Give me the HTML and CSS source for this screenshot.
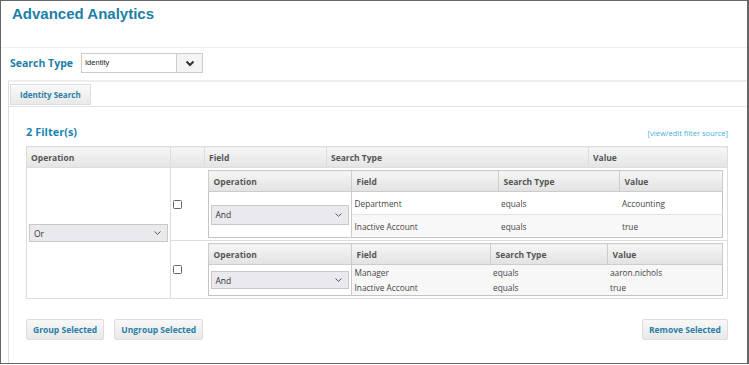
FILE: index.html
```html
<!DOCTYPE html>
<html lang="en">
	<head>
		<meta charset="UTF-8" />
		<title>Advanced Analytics</title>
		<link rel="stylesheet" href="styles.css">
	</head>
	<body>
		<div class="frame">
			<div class="page-header">
				<h1 class="title">Advanced Analytics</h1>
			</div>

			<div class="search-row">
				<span class="search-label">Search Type</span>
				<div class="select-box">
					<span class="select-value">Identity</span>
					<span class="select-btn">
						<svg width="10" height="7" viewBox="0 0 10 7"><path d="M1.5 1.5 L5 5 L8.5 1.5" fill="none" stroke="#333" stroke-width="2"/></svg>
					</span>
				</div>
			</div>

			<div class="panel">
				<div class="tab-bar">
					<span class="tab">Identity Search</span>
				</div>

				<div class="panel-body">
					<div class="filters-head">
						<span class="filters-title">2 Filter(s)</span>
						<a class="source-link" href="#">[view/edit filter source]</a>
					</div>

					<table class="filters">
						<colgroup>
							<col style="width: 144px" />
							<col style="width: 34px" />
							<col style="width: 122px" />
							<col style="width: 262px" />
							<col />
						</colgroup>
						<thead>
							<tr>
								<th>Operation</th>
								<th></th>
								<th>Field</th>
								<th>Search Type</th>
								<th>Value</th>
							</tr>
						</thead>
						<tbody>
							<tr class="first-row">
								<td rowspan="2" class="op-cell">
									<div class="op-select">
										<span>Or</span>
										<svg width="7" height="4" viewBox="0 0 7 4"><path d="M0.5 0.5 L3.5 3.3 L6.5 0.5" fill="none" stroke="#555" stroke-width="1"/></svg>
									</div>
								</td>
								<td class="check-cell"><span class="checkbox"></span></td>
								<td colspan="3" class="group-cell">
									<table class="group group-a">
										<colgroup>
											<col style="width: 143px" />
											<col style="width: 147px" />
											<col style="width: 121px" />
											<col />
										</colgroup>
										<thead>
											<tr>
												<th>Operation</th>
												<th>Field</th>
												<th>Search Type</th>
												<th>Value</th>
											</tr>
										</thead>
										<tbody>
											<tr>
												<td rowspan="2" class="group-op">
													<div class="op-select">
														<span>And</span>
														<svg width="7" height="4" viewBox="0 0 7 4"><path d="M0.5 0.5 L3.5 3.3 L6.5 0.5" fill="none" stroke="#555" stroke-width="1"/></svg>
													</div>
												</td>
												<td>Department</td>
												<td>equals</td>
												<td>Accounting</td>
											</tr>
											<tr class="alt">
												<td>Inactive Account</td>
												<td>equals</td>
												<td>true</td>
											</tr>
										</tbody>
									</table>
								</td>
							</tr>
							<tr class="second-row">
								<td class="check-cell"><span class="checkbox"></span></td>
								<td colspan="3" class="group-cell">
									<table class="group group-b">
										<colgroup>
											<col style="width: 143px" />
											<col style="width: 139px" />
											<col style="width: 117px" />
											<col />
										</colgroup>
										<thead>
											<tr>
												<th>Operation</th>
												<th>Field</th>
												<th>Search Type</th>
												<th>Value</th>
											</tr>
										</thead>
										<tbody>
											<tr>
												<td rowspan="2" class="group-op">
													<div class="op-select">
														<span>And</span>
														<svg width="7" height="4" viewBox="0 0 7 4"><path d="M0.5 0.5 L3.5 3.3 L6.5 0.5" fill="none" stroke="#555" stroke-width="1"/></svg>
													</div>
												</td>
												<td>Manager</td>
												<td>equals</td>
												<td>aaron.nichols</td>
											</tr>
											<tr>
												<td>Inactive Account</td>
												<td>equals</td>
												<td>true</td>
											</tr>
										</tbody>
									</table>
								</td>
							</tr>
						</tbody>
					</table>

					<div class="actions">
						<div class="actions-left">
							<button class="btn">Group Selected</button>
							<button class="btn">Ungroup Selected</button>
						</div>
						<button class="btn">Remove Selected</button>
					</div>
				</div>
			</div>
		</div>
	</body>
</html>
```

FILE: styles.css
```css
body {
	margin: 0;
	font-family: "Open Sans", "Liberation Sans", sans-serif;
	color: #444;
	background: #fff;
}
.frame {
	box-sizing: border-box;
	width: 749px;
	height: 364px;
	border: 1px solid #666;
	border-right-width: 2px;
	display: flex;
	flex-direction: column;
}
.page-header {
	height: 46px;
	padding-left: 11px;
	border-bottom: 1px solid #eee;
}
.title {
	margin: 0;
	padding-top: 4px;
	font: bold 15px/17px "Liberation Sans", Arial, sans-serif;
	color: #1b7fa7;
}
.search-row {
	display: flex;
	align-items: center;
	height: 20px;
	padding: 5px 0 7px 9px;
}
.search-label {
	font-size: 10.5px;
	font-weight: bold;
	color: #1b7ea6;
	margin-right: 8px;
}
.select-box {
	box-sizing: border-box;
	display: flex;
	width: 122px;
	height: 20px;
	border: 1px solid #ccc;
}
.select-value {
	flex: 1;
	padding-left: 3px;
	font: 7.5px/18px "Liberation Sans", Arial, sans-serif;
	color: #222;
}
.select-btn {
	width: 25px;
	display: flex;
	align-items: center;
	justify-content: center;
	border-left: 1px solid #ccc;
	background: #f4f4f4;
}
.panel {
	flex: 1;
	margin-left: 7px;
	border-left: 1px solid #ddd;
	border-top: 2px solid #eee;
}
.tab-bar {
	display: flex;
	padding: 2px 0 1px 1px;
	border-bottom: 1px solid #e3e3e3;
}
.tab {
	box-sizing: border-box;
	display: inline-flex;
	align-items: center;
	height: 21px;
	padding: 0 9px;
	border: 1px solid #ddd;
	background: linear-gradient(#fafafa, #e9e9e9);
	font-size: 8px;
	font-weight: bold;
	color: #2a7ea6;
}
.panel-body {
	padding: 17px 19px 0 17px;
}
.filters-head {
	display: flex;
	justify-content: space-between;
	align-items: baseline;
	margin-bottom: 7px;
}
.filters-title {
	font-size: 11px;
	line-height: 15px;
	font-weight: bold;
	color: #1b86b0;
}
.source-link {
	font-size: 7.5px;
	color: #3fb0dc;
	text-decoration: none;
}
.filters {
	width: 100%;
	table-layout: fixed;
	border-collapse: collapse;
	border: 1px solid #ddd;
}
.filters > thead th {
	height: 20px;
	padding: 0 0 0 4px;
	text-align: left;
	font-size: 8.5px;
	font-weight: bold;
	color: #555;
	border: 1px solid #ddd;
	background: linear-gradient(#f6f6f6, #e4e4e4);
}
.filters > tbody > tr > td {
	padding: 0;
	vertical-align: middle;
}
.op-cell {
	padding: 0 2px !important;
	border-right: 1px solid #ddd;
}
.second-row > td {
	border-top: 1px solid #ddd;
}
.check-cell {
	padding-left: 2px !important;
}
.checkbox {
	display: block;
	box-sizing: border-box;
	width: 9px;
	height: 9px;
	border: 1px solid #666;
	border-radius: 1.5px;
	background: #fff;
}
.group-cell {
	padding: 2px 4px 2px 3px !important;
}
.op-select {
	box-sizing: border-box;
	display: flex;
	align-items: center;
	justify-content: space-between;
	height: 18px;
	padding: 0 6px 0 4px;
	border: 1px solid #c8c8c8;
	background: #eaeaee;
	font-size: 8.5px;
	color: #333;
}
.group {
	width: 100%;
	table-layout: fixed;
	border-collapse: collapse;
	border: 1px solid #c4c4c4;
	font-size: 8.3px;
}
.group th {
	height: 20px;
	padding: 0 0 0 5px;
	text-align: left;
	font-size: 8.5px;
	font-weight: bold;
	color: #555;
	border: 1px solid #ccc;
	background: linear-gradient(#f6f6f6, #e2e2e2);
}
.group td {
	padding: 0 0 0 3px;
	color: #444;
}
.group-a td {
	height: 22px;
}
.group-a .alt td {
	border-top: 1px solid #e2e2e2;
	background: #f8f8f8;
}
.group-b td {
	height: 15px;
	background: #f7f7f7;
}
.group-op {
	padding: 0 2px !important;
	border-right: 1px solid #ccc;
	background: #fff !important;
}
.group-a .op-select {
	height: 20px;
}
.actions {
	display: flex;
	justify-content: space-between;
	margin-top: 20px;
}
.actions-left {
	display: flex;
	gap: 10px;
}
.btn {
	box-sizing: border-box;
	height: 21px;
	padding: 0 6px;
	border: 1px solid #ddd;
	border-radius: 2px;
	background: linear-gradient(#f8f8f8, #e8e8e8);
	font-family: "Open Sans", sans-serif;
	font-size: 8.5px;
	font-weight: bold;
	color: #2a7ea6;
}
```
